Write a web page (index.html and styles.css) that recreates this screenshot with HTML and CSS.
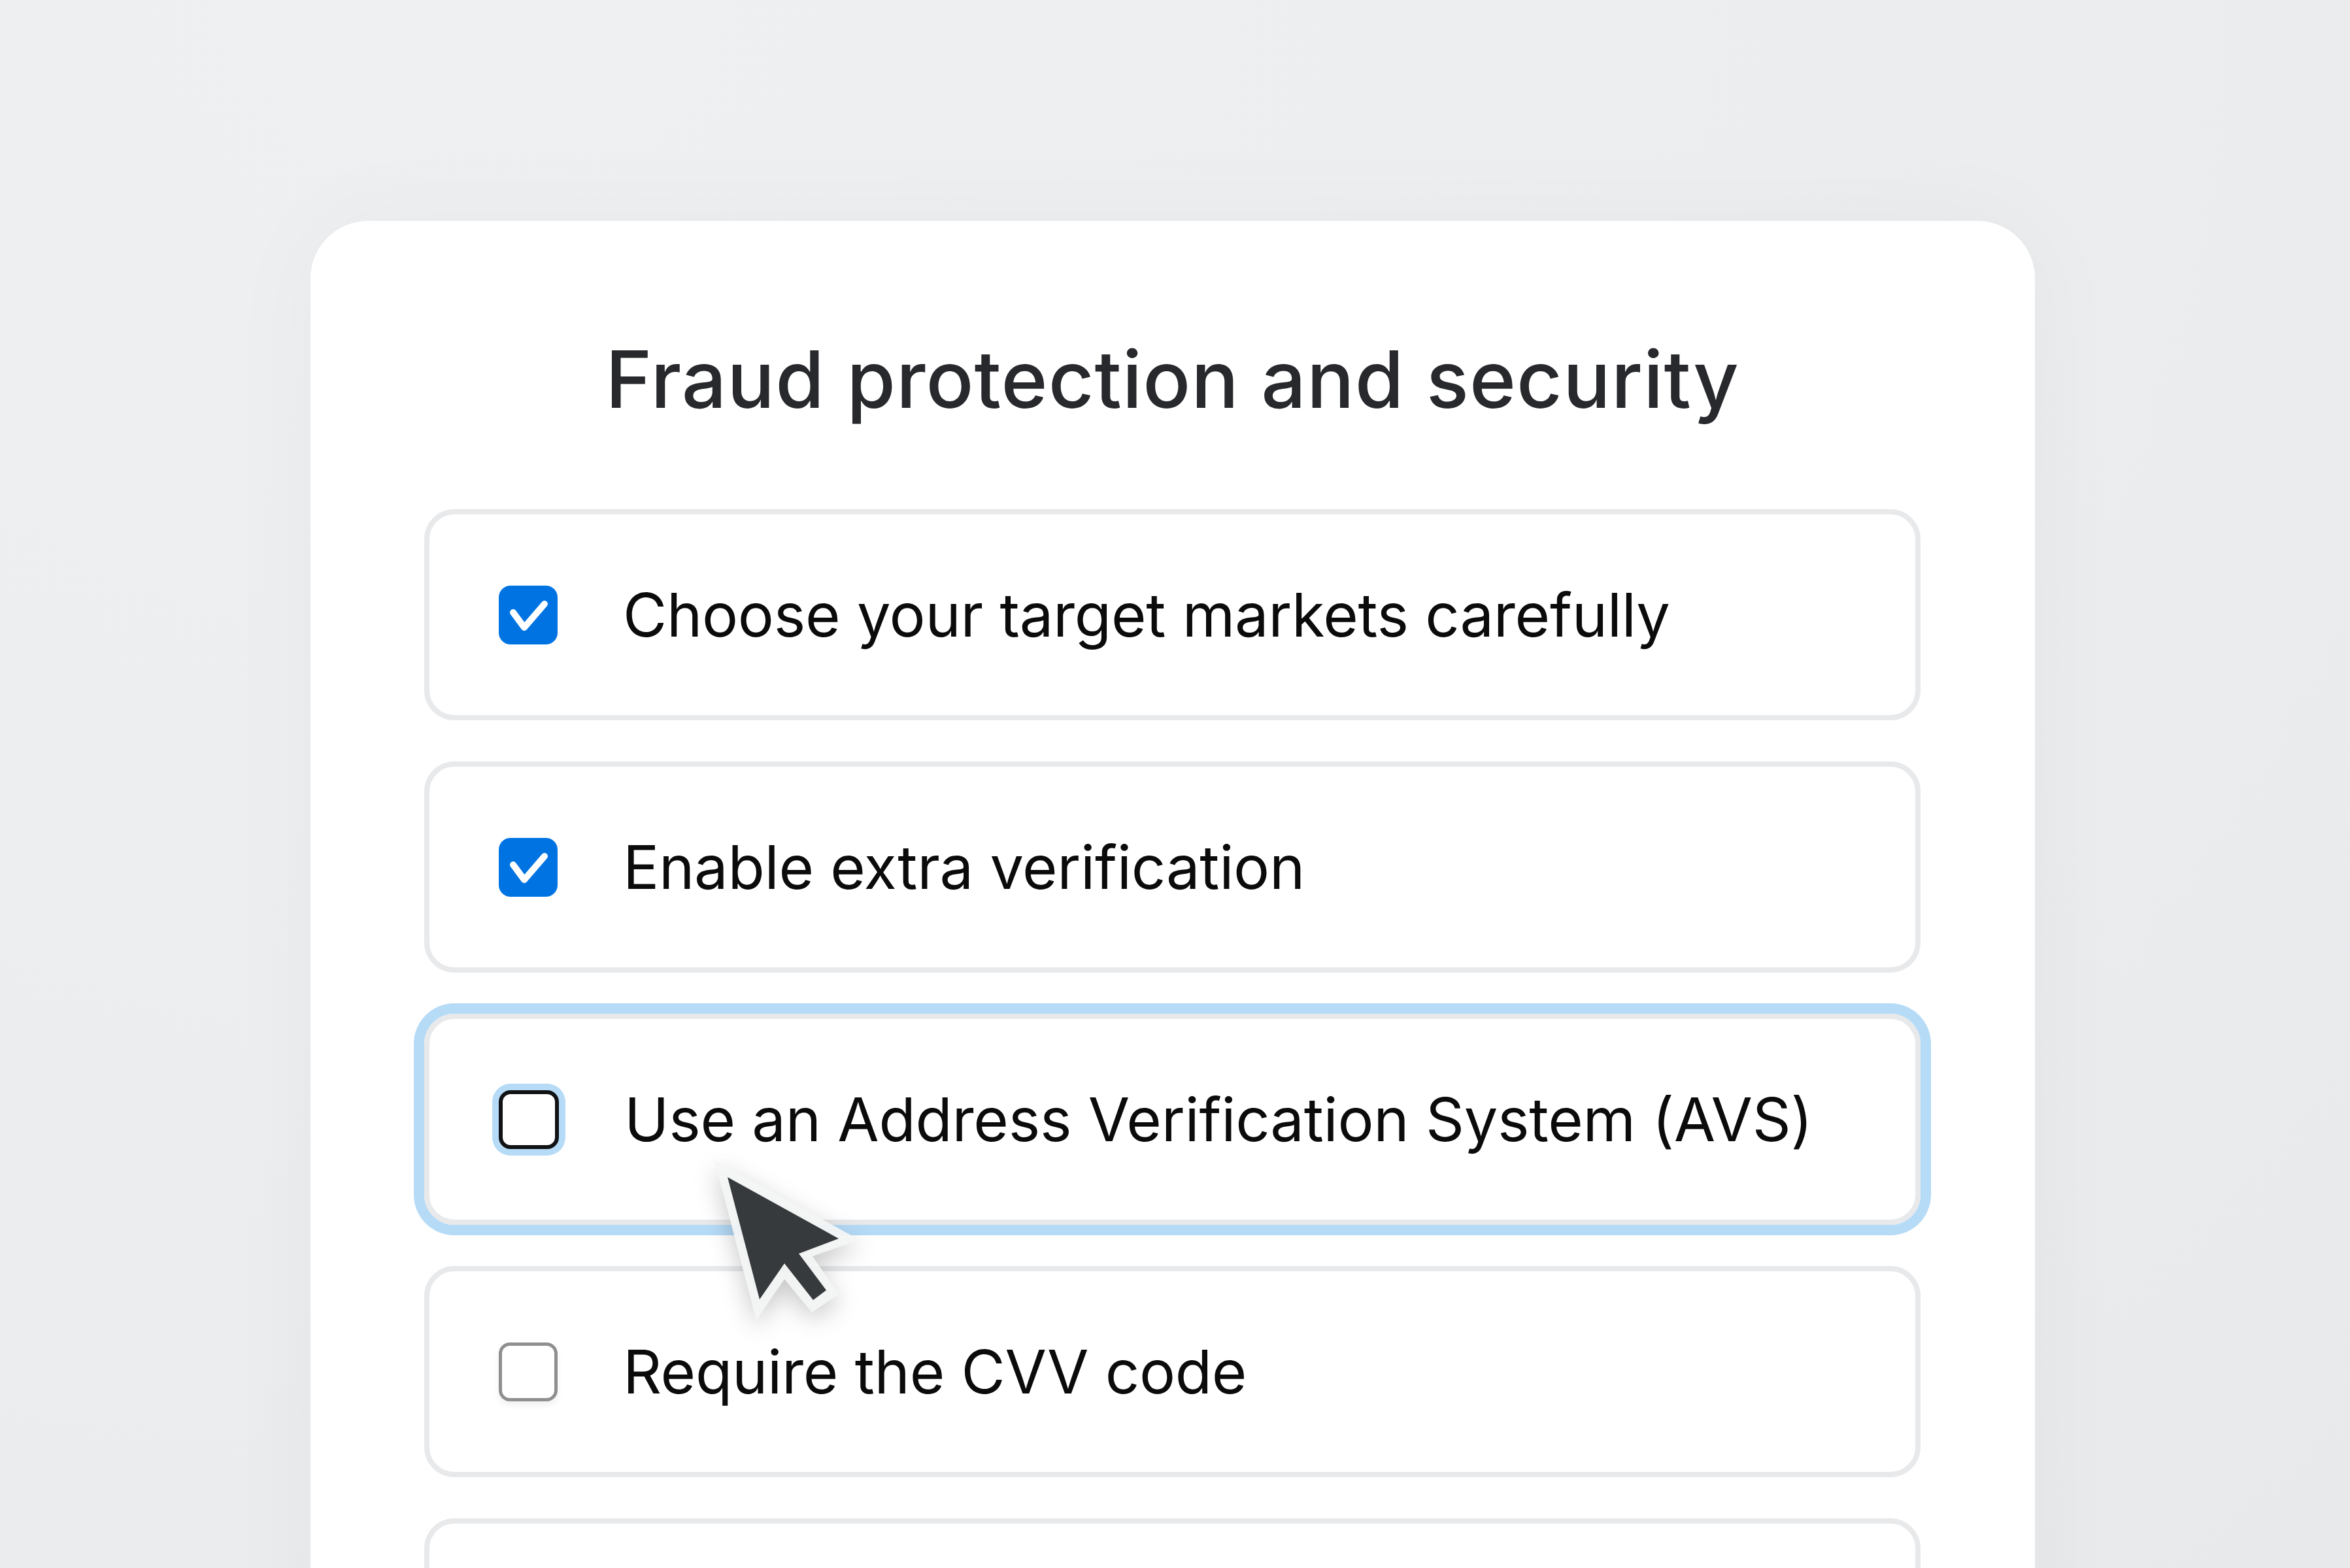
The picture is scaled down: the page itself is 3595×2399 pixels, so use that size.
FILE: index.html
```html
<!DOCTYPE html>
<html lang="en">
<head>
<meta charset="utf-8">
<title>Fraud protection and security</title>
<link rel="stylesheet" href="styles.css">
</head>
<body>
<main class="stage">
  <section class="card">
    <h1 class="title">Fraud protection and security</h1>
    <ul class="list">
      <li class="row">
        <span class="box box-checked">
          <svg viewBox="0 0 90 90" width="90" height="90"><polyline points="22,41 39,64 70,28" fill="none" stroke="#fff" stroke-width="10" stroke-linecap="round" stroke-linejoin="round"/></svg>
        </span>
        <span class="label">Choose your target markets carefully</span>
      </li>
      <li class="row">
        <span class="box box-checked">
          <svg viewBox="0 0 90 90" width="90" height="90"><polyline points="22,41 39,64 70,28" fill="none" stroke="#fff" stroke-width="10" stroke-linecap="round" stroke-linejoin="round"/></svg>
        </span>
        <span class="label">Enable extra verification</span>
      </li>
      <li class="row row-focus">
        <span class="box box-focus"></span>
        <span class="label">Use an Address Verification System (AVS)</span>
      </li>
      <li class="row">
        <span class="box box-empty"></span>
        <span class="label">Require the CVV code</span>
      </li>
      <li class="row"></li>
    </ul>
  </section>
</main>
<svg class="cursor" viewBox="0 0 280 300" width="280" height="300" aria-hidden="true">
  <polygon points="13,15 235,137 163,162 203,220 162,248 120,197 77,260" fill="#f4f5f5" fill-opacity="0.93"/>
  <polygon points="33,41 203,135 142,158 184,214 164,229 120,173 82,228" fill="#363a3d"/>
</svg>
</body>
</html>
```

FILE: styles.css
```css
html, body {
  margin: 0;
  padding: 0;
}

body {
  width: 3595px;
  height: 2399px;
  overflow: hidden;
  position: relative;
  background: radial-gradient(ellipse at 20% 0%, #eff0f2 0%, #eceef0 45%, #e8e9eb 100%);
  font-family: Inter, "Noto Sans", "Liberation Sans", sans-serif;
}

.stage {
  padding: 338px 0 0 475px;
}

.card {
  width: 2638px;
  height: 2400px;
  box-sizing: border-box;
  background: #ffffff;
  border-radius: 88px;
  padding: 169px 175px 0 174px;
  box-shadow: 0 0 160px rgba(40, 44, 52, 0.035);
}

.title {
  margin: 0 0 126px;
  font-size: 121px;
  line-height: 146px;
  font-weight: 500;
  color: #28292d;
  text-align: center;
  letter-spacing: 1px;
}

.list {
  list-style: none;
  margin: 0;
  padding: 0;
  display: flex;
  flex-direction: column;
  gap: 63px;
}

.row {
  height: 323px;
  flex: none;
  box-sizing: border-box;
  border: 8px solid #e8e9eb;
  border-radius: 46px;
  display: flex;
  align-items: center;
  padding-left: 106px;
  gap: 100px;
}

.row-focus {
  box-shadow: 0 0 0 16px #b6dbf7;
}

.box {
  flex: none;
  width: 90px;
  height: 90px;
  box-sizing: border-box;
  border-radius: 18px;
  display: flex;
}

.box-checked {
  background: #0073e2;
}

.box-focus {
  width: 92px;
  border: 6px solid #111214;
  background: #fff;
  box-shadow: 0 0 0 10px #b6dbf7;
}

.box-empty {
  border: 5px solid #8f8f8f;
  background: #fff;
  border-radius: 17px;
  box-shadow: 0 6px 10px rgba(0, 0, 0, 0.06);
}

.label {
  font-size: 92px;
  line-height: 113px;
  font-weight: 400;
  color: #0b0b0c;
  letter-spacing: -0.3px;
  white-space: nowrap;
}

.cursor {
  position: absolute;
  left: 1080px;
  top: 1760px;
  filter: drop-shadow(0 12px 18px rgba(0, 0, 0, 0.22));
}
```
